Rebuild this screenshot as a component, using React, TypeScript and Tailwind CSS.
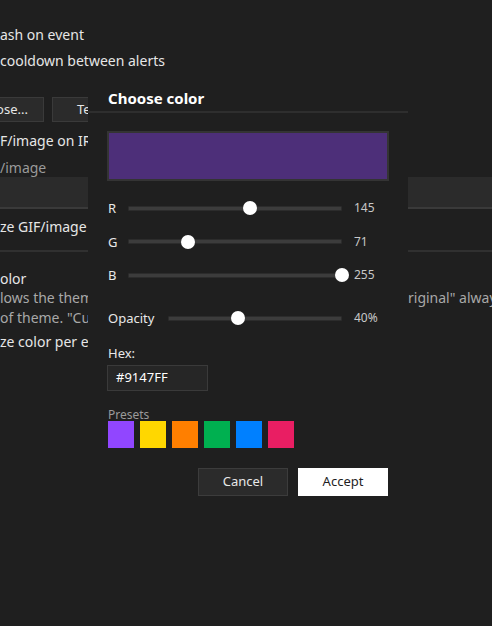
import React from "react";

const FONT = "font-['Noto_Sans','Open_Sans',sans-serif]";

function Slider({
  label,
  value,
  max,
  display,
  labelW,
  trackW,
}: {
  label: string;
  value: number;
  max: number;
  display: string;
  labelW: string;
  trackW: string;
}) {
  const pct = (value / max) * 100;
  return (
    <div className="flex h-[20px] items-center">
      <div className={`${labelW} shrink-0 whitespace-nowrap pl-[1px] text-[13px] leading-[20px] text-[#e8e8e8]`}>{label}</div>
      <div className={`relative flex h-[20px] shrink-0 items-center ${trackW}`}>
        <div className="h-[5px] w-full rounded-[1px] border border-[#2c2c2c] bg-[#3c3c3c]" />
        <div
          className="absolute top-1/2 h-[14px] w-[14px] -translate-x-1/2 -translate-y-1/2 rounded-full bg-white"
          style={{ left: `${pct}%` }}
        />
      </div>
      <div className="ml-[12px] text-[12px] leading-[20px] text-[#c8c8c8]">{display}</div>
    </div>
  );
}

export default function App() {
  const presets = ["#9146FF", "#FFD700", "#FF7F00", "#00B050", "#0080FF", "#E91E63"];
  return (
    <div className={`relative h-[626px] w-full overflow-hidden bg-[#1f1f1f] ${FONT}`}>
      {/* background settings page */}
      <div className="flex flex-col pt-[25px] text-[14px] text-[#e6e6e6]">
        <div className="h-[20px] whitespace-nowrap leading-[20px]">ash on event</div>
        <div className="mt-[6px] h-[20px] whitespace-nowrap leading-[20px]">cooldown between alerts</div>
        <div className="mt-[26px] flex h-[25px] gap-[8px]">
          <div className="ml-[-44px] flex h-[25px] w-[88px] items-center justify-center border border-[#3a3a3a] bg-[#2b2b2b] text-[13px]">
            Choose...
          </div>
          <div className="flex h-[25px] w-[120px] items-center border border-[#3a3a3a] bg-[#2b2b2b] pl-[24px] text-[13px]">
            Test alert
          </div>
        </div>
        <div className="mt-[9px] h-[20px] whitespace-nowrap leading-[20px]">F/image on IRL events</div>
        <div className="mt-[8px] h-[18px] whitespace-nowrap leading-[18px] text-[#9a9a9a]">/image</div>
        <div className="h-[32px] w-full border-b-2 border-[#3a3a3a] bg-[#2b2b2b]" />
        <div className="mt-[8px] h-[20px] whitespace-nowrap leading-[20px]">ze GIF/image per event</div>
        <div className="mt-[13px] h-[2px] w-full bg-[#303030]" />
        <div className="mt-[17px] h-[20px] whitespace-nowrap leading-[20px]">olor</div>
        <div className="flex h-[18px] whitespace-nowrap leading-[18px] text-[#a8a8a8]">
          <span className="w-[408px] shrink-0 overflow-hidden">lows the theme accent color by default.</span>
          <span>riginal" always</span>
        </div>
        <div className="mt-[2px] h-[18px] whitespace-nowrap leading-[18px] text-[#a8a8a8]">of theme. "Custom" lets you pick</div>
        <div className="mt-[5px] h-[20px] whitespace-nowrap leading-[20px]">ze color per event</div>
      </div>

      {/* dialog */}
      <div className="absolute left-[88px] top-[84px] w-[320px] bg-[#1f1f1f] pb-[24px]">
        <div className="flex h-[29px] items-start border-b-2 border-[#2e2e2e] px-[20px]">
          <div className="text-[15px] font-bold leading-[28px] text-white">Choose color</div>
        </div>
        <div className="flex flex-col px-[19px]">
          <div className="mt-[18px] h-[50px] w-[282px] border-2 border-[#343434] bg-[#4d2f79]" />
          <div className="mt-[17px] flex flex-col gap-[13.5px]">
            <Slider label="R" value={145} max={255} display="145" labelW="w-[21px]" trackW="w-[214px]" />
            <Slider label="G" value={71} max={255} display="71" labelW="w-[21px]" trackW="w-[214px]" />
            <Slider label="B" value={255} max={255} display="255" labelW="w-[21px]" trackW="w-[214px]" />
          </div>
          <div className="mt-[23px]">
            <Slider label="Opacity" value={40} max={100} display="40%" labelW="w-[61px]" trackW="w-[174px]" />
          </div>
          <div className="mt-[15px] pl-[1px] text-[13px] leading-[20px] text-[#e8e8e8]">Hex:</div>
          <div className="mt-[2px] flex h-[26px] w-[101px] items-center border border-[#3a3a3a] bg-[#262626] pl-[8px] text-[13px] text-white">
            #9147FF
          </div>
          <div className="mt-[18px] pl-[1px] text-[12px] leading-[12px] text-[#9a9a9a]">Presets</div>
          <div className="flex gap-[6px] pl-[1px]">
            {presets.map((c) => (
              <div key={c} className="h-[27px] w-[26px]" style={{ backgroundColor: c }} />
            ))}
          </div>
          <div className="mt-[20px] flex justify-end gap-[10px] pr-[1px]">
            <div className="flex h-[28px] w-[90px] items-center justify-center border border-[#3c3c3c] bg-[#2b2b2b] text-[13px] text-[#e8e8e8]">
              Cancel
            </div>
            <div className="flex h-[28px] w-[90px] items-center justify-center bg-white text-[13px] text-[#1f1f1f]">
              Accept
            </div>
          </div>
        </div>
      </div>
    </div>
  );
}
